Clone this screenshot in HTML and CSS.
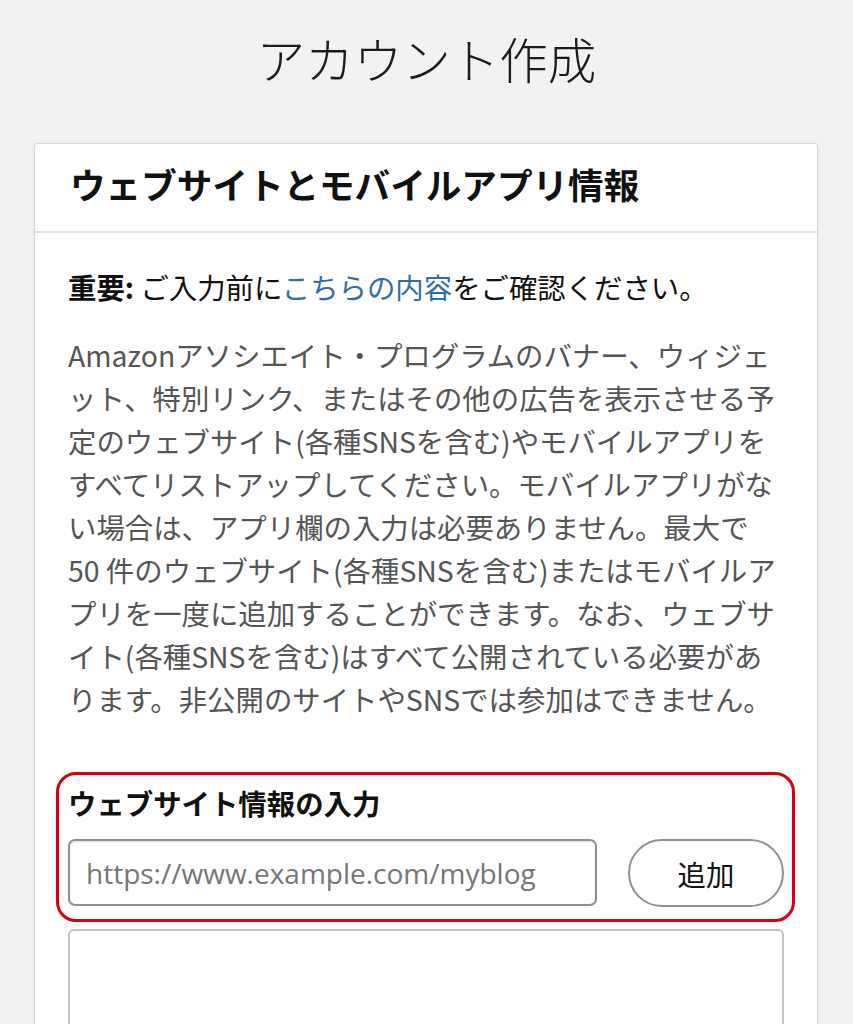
FILE: index.html
```html
<!DOCTYPE html>
<html lang="ja">
<head>
<meta charset="utf-8">
<title>アカウント作成</title>
<link rel="stylesheet" href="styles.css">
</head>
<body>
<h1 class="page-title">アカウント作成</h1>
<section class="card">
  <h2 class="card-header">ウェブサイトとモバイルアプリ情報</h2>
  <div class="card-body">
    <p class="notice"><strong>重要:</strong> ご入力前に<a class="link" href="#">こちらの内容</a>をご確認ください。</p>
    <p class="desc">Amazonアソシエイト・プログラムのバナー、ウィジェット、特別リンク、またはその他の広告を表示させる予定のウェブサイト(各種SNSを含む)やモバイルアプリをすべてリストアップしてください。モバイルアプリがない場合は、アプリ欄の入力は必要ありません。最大で50&nbsp;件のウェブサイト(各種SNSを含む)またはモバイルアプリを一度に追加することができます。なお、ウェブサイト(各種SNSを含む)はすべて公開されている必要があります。非公開のサイトやSNSでは参加はできません。</p>
    <div class="site-entry">
      <label class="entry-label" for="site-url">ウェブサイト情報の入力</label>
      <div class="entry-row">
        <input id="site-url" class="url-input" type="text" placeholder="https://www.example.com/myblog">
        <button class="add-btn" type="button">追加</button>
      </div>
    </div>
    <textarea class="site-list" aria-label="ウェブサイト一覧"></textarea>
  </div>
</section>
</body>
</html>
```

FILE: styles.css
```css
html, body {
  margin: 0;
  padding: 0;
  background: #f2f2f2;
}

body {
  font-family: "Noto Sans CJK JP", "Noto Sans", sans-serif;
  color: #111;
}

.page-title {
  margin: 0;
  padding-top: 29px;
  font-size: 48.5px;
  line-height: 58px;
  font-weight: 300;
  text-align: center;
  color: #1c1c1c;
}

.card {
  margin: 56px 35px 0 34px;
  background: #fff;
  border: 1px solid #d9d9d9;
  border-bottom: none;
  border-radius: 3px 3px 0 0;
  box-shadow: 0 1px 3px rgba(0, 0, 0, 0.08);
  min-height: 900px;
}

.card-header {
  margin: 0;
  padding: 18px 33px 25px 35px;
  font-size: 35.6px;
  line-height: 44px;
  font-weight: 700;
  color: #111;
  border-bottom: 2px solid #e3e3e3;
}

.card-body {
  padding: 32px 33px 0 33px;
}

.notice {
  margin: 0;
  font-size: 28.4px;
  line-height: 43px;
  color: #111;
}

.notice strong {
  font-weight: 700;
}

.link {
  color: #2f6ea6;
  text-decoration: none;
}

.desc {
  margin: 25px 4px 0 0;
  font-size: 28.4px;
  line-height: 43px;
  color: #555;
}

.site-entry {
  margin: 52px -11px 0 -12px;
  padding: 10px 8px 12px 9px;
  border: 3px solid #d6000f;
  border-radius: 20px;
}

.entry-label {
  display: block;
  font-size: 28.4px;
  line-height: 36px;
  font-weight: 700;
  color: #111;
  margin-bottom: 18px;
}

.entry-row {
  display: flex;
  align-items: flex-start;
  gap: 31px;
}

.url-input {
  flex: 1;
  min-width: 0;
  box-sizing: border-box;
  height: 67px;
  margin: 0;
  padding: 0 16px;
  border: 2px solid #8f8f8f;
  border-radius: 7px;
  box-shadow: inset 0 1px 2px rgba(0, 0, 0, 0.15);
  background: #fff;
  font-family: "Open Sans", "Noto Sans CJK JP", sans-serif;
  font-size: 28px;
  color: #111;
  outline: none;
}

.url-input::placeholder {
  color: #767676;
}

.add-btn {
  box-sizing: border-box;
  width: 156px;
  height: 68px;
  margin: 0;
  padding: 0;
  border: 2px solid #909090;
  border-radius: 34px;
  background: #fff;
  font-family: "Noto Sans CJK JP", sans-serif;
  font-size: 28.4px;
  color: #111;
}

.site-list {
  display: block;
  box-sizing: border-box;
  width: 100%;
  height: 220px;
  margin: 7px 0 0 0;
  border: 2px solid #c2c2c2;
  border-radius: 6px;
  background: #fff;
  resize: none;
  outline: none;
}
```
